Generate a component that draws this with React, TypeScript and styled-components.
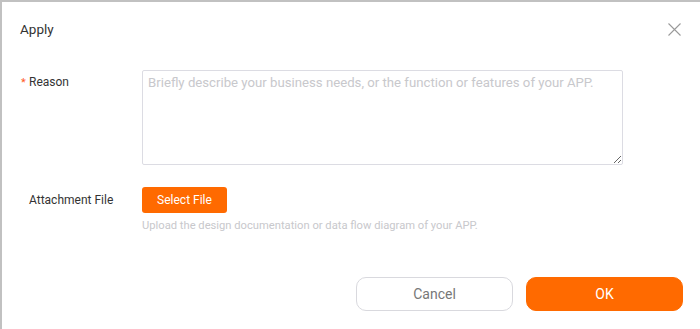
import React from "react";
import styled, { createGlobalStyle } from "styled-components";

const GlobalStyle = createGlobalStyle`
  html, body {
    margin: 0;
    padding: 0;
    background: #c1c1c1;
  }
  * { box-sizing: border-box; }
  #root {
    font-family: Roboto, "Noto Sans", Arial, sans-serif;
  }
`;

const Page = styled.div`
  width: 700px;
  height: 329px;
  padding: 2px 0 0 2px;
  background: #c1c1c1;
  overflow: hidden;
`;

const Modal = styled.div`
  width: 100%;
  height: 100%;
  background: #ffffff;
  display: flex;
  flex-direction: column;
`;

const Header = styled.div`
  height: 54px;
  display: flex;
  align-items: center;
  justify-content: space-between;
  padding: 0 19px 0 18px;
`;

const Title = styled.h3`
  margin: 0;
  font-size: 13.5px;
  font-weight: 400;
  color: #333333;
  line-height: 20px;
`;

const CloseButton = styled.button`
  width: 14px;
  height: 14px;
  padding: 0;
  border: none;
  background: transparent;
  display: flex;
  align-items: center;
  justify-content: center;
  cursor: pointer;
`;

const Body = styled.div`
  margin-top: 14px;
`;

const Row = styled.div<{ $gap?: number; $lh?: number }>`
  display: grid;
  grid-template-columns: 140px 1fr;
  margin-top: ${(p) => p.$gap ?? 0}px;
  line-height: ${(p) => p.$lh ?? 24}px;
`;

const Label = styled.label`
  padding-left: 27px;
  font-size: 12px;
  color: #333333;
`;

const Required = styled.span`
  display: inline-block;
  width: 8px;
  margin-left: -8px;
  color: #ff5a1f;
  font-size: 11px;
`;

const TextArea = styled.textarea`
  display: block;
  width: 481px;
  height: 95px;
  padding: 2px 5px;
  border: 1px solid #dcdce3;
  border-radius: 2px;
  font-family: Roboto, "Noto Sans", Arial, sans-serif;
  font-size: 13.2px;
  line-height: 20px;
  color: #333;
  resize: vertical;
  outline: none;
  &::placeholder {
    color: #c8c8cc;
  }
`;

const Field = styled.div`
  display: flex;
  flex-direction: column;
  align-items: flex-start;
`;

const SmallButton = styled.button`
  width: 85px;
  height: 26px;
  border: none;
  border-radius: 3px;
  background: #ff6a00;
  color: #ffffff;
  font-family: Roboto, "Noto Sans", Arial, sans-serif;
  font-size: 12px;
  cursor: pointer;
`;

const Hint = styled.div`
  margin-top: 5px;
  font-size: 11.2px;
  line-height: 16px;
  color: #c8c8cc;
`;

const Footer = styled.div`
  margin-top: auto;
  margin-bottom: 18px;
  display: flex;
  justify-content: flex-end;
  gap: 13px;
  padding-right: 17px;
`;

const FooterButton = styled.button<{ $primary?: boolean }>`
  width: 157px;
  height: 34px;
  border-radius: 10px;
  border: 1px solid ${(p) => (p.$primary ? "#ff6a00" : "#d9d9de")};
  background: ${(p) => (p.$primary ? "#ff6a00" : "#ffffff")};
  color: ${(p) => (p.$primary ? "#ffffff" : "#777777")};
  font-family: Roboto, "Noto Sans", Arial, sans-serif;
  font-size: 14px;
  cursor: pointer;
`;

export default function App() {
  return (
    <>
      <GlobalStyle />
      <Page>
        <Modal>
          <Header>
            <Title>Apply</Title>
            <CloseButton aria-label="Close">
              <svg width="13" height="13" viewBox="0 0 13 13">
                <path d="M0.5 0.5 L12.5 12.5 M12.5 0.5 L0.5 12.5" stroke="#9a9a9a" strokeWidth="1.1" fill="none" />
              </svg>
            </CloseButton>
          </Header>
          <Body>
            <Row $lh={24}>
              <Label>
                <Required>*</Required>Reason
              </Label>
              <TextArea placeholder="Briefly describe your business needs, or the function or features of your APP." />
            </Row>
            <Row $gap={22} $lh={26}>
              <Label>Attachment File</Label>
              <Field>
                <SmallButton>Select File</SmallButton>
                <Hint>Upload the design documentation or data flow diagram of your APP.</Hint>
              </Field>
            </Row>
          </Body>
          <Footer>
            <FooterButton>Cancel</FooterButton>
            <FooterButton $primary>OK</FooterButton>
          </Footer>
        </Modal>
      </Page>
    </>
  );
}
